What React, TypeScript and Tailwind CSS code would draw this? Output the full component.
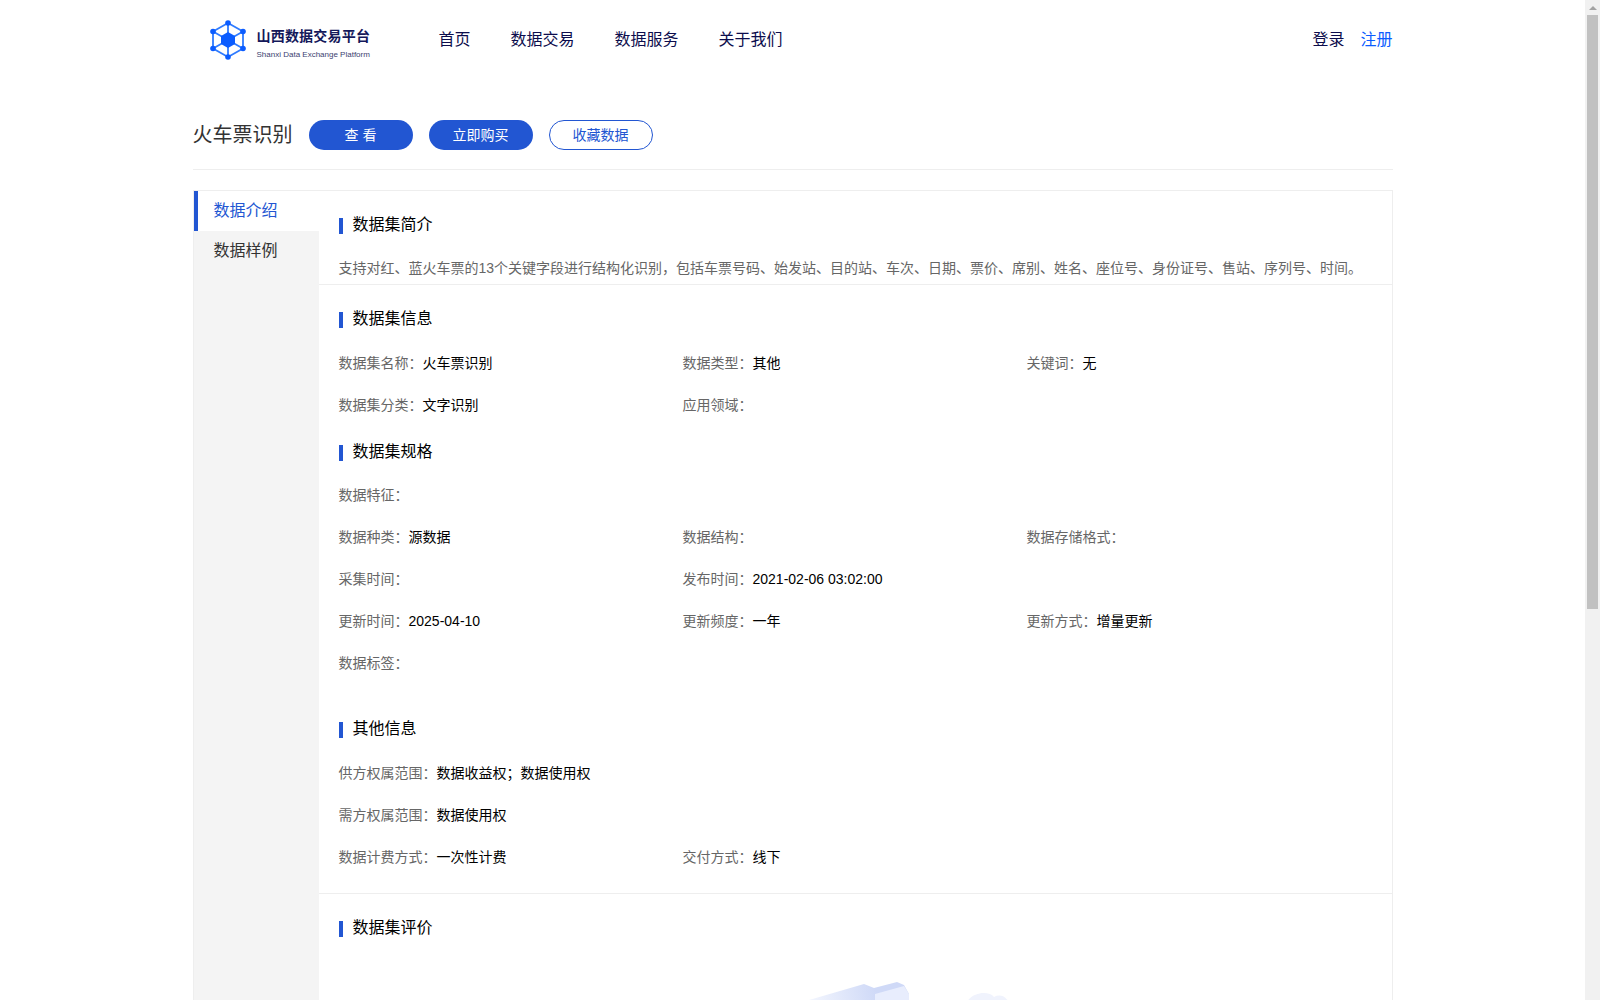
const font = "font-['Liberation_Sans','Noto_Sans_CJK_SC',sans-serif]";

type Field = { label: string; value?: string };

function Heading({ title, className }: { title: string; className?: string }) {
  return (
    <div className={`flex h-4 items-center ${className ?? ""}`}>
      <span className="h-4 w-1 bg-[#2256d2]" />
      <h2 className="ml-2.5 -mt-[3px] text-base text-black">{title}</h2>
    </div>
  );
}

function FieldRow({ fields }: { fields: Field[] }) {
  return (
    <div className="grid h-[42px] grid-cols-[344px_344px_344px] items-center text-sm">
      {fields.map((field) => (
        <div key={field.label}>
          <span className="text-[#666]">{field.label}：</span>
          <span className="text-black">{field.value}</span>
        </div>
      ))}
    </div>
  );
}

function Logo() {
  return (
    <svg width="40" height="42" viewBox="0 0 40 42" fill="none">
      <g stroke="#2f7bff" strokeWidth="1.8">
        <path d="M20 4 35 12.500V29.500L20 38 5 29.500V12.500Z" />
        <path d="M20 4V38M5 12.500 35 29.500M35 12.500 5 29.500" />
      </g>
      <path d="M20 13 27 17V25L20 29 13 25V17Z" fill="#0b5cff" />
      <g fill="#0b5cff">
        <circle cx="20" cy="4" r="2.800" />
        <circle cx="35" cy="12.500" r="2.800" />
        <circle cx="35" cy="29.500" r="2.800" />
        <circle cx="20" cy="38" r="2.800" />
        <circle cx="5" cy="29.500" r="2.800" />
        <circle cx="5" cy="12.500" r="2.800" />
      </g>
    </svg>
  );
}

export default function App() {
  return (
    <div className={`flex h-screen overflow-hidden bg-white ${font}`}>
      <div className="flex-1 overflow-hidden">
        <div className="mx-auto w-[1200px]">
          <header className="flex h-[78px] items-center pt-[2px]">
            <div className="ml-[15px] flex items-center">
              <Logo />
              <div className="mt-[6px] ml-[9px] w-[120px]">
                <div className="text-sm leading-5 font-bold tracking-[0.2px] text-[#14185a]">山西数据交易平台</div>
                <div className="mt-[3px] text-[8px] leading-3 whitespace-nowrap text-[#3c4270]">
                  Shanxi Data Exchange Platform
                </div>
              </div>
            </div>
            <nav className="ml-[62px] flex gap-10 text-base text-[#0d0d4d]">
              <a>首页</a>
              <a>数据交易</a>
              <a>数据服务</a>
              <a>关于我们</a>
            </nav>
            <div className="ml-auto flex gap-4 text-base">
              <a className="text-[#0d0d4d]">登录</a>
              <a className="text-[#0b5cff]">注册</a>
            </div>
          </header>

          <div className="flex h-[92px] items-start border-b border-[#eee] pt-[42px]">
            <h1 className="flex h-[30px] w-[116px] items-center text-xl text-[#333]">火车票识别</h1>
            <div className="flex gap-4 text-sm">
              <button className="h-[30px] w-[104px] rounded-full bg-[#2256d2] text-white">查 看</button>
              <button className="h-[30px] w-[104px] rounded-full bg-[#2256d2] text-white">立即购买</button>
              <button className="h-[30px] w-[104px] rounded-full border border-[#2256d2] text-[#2256d2]">收藏数据</button>
            </div>
          </div>

          <div className="mt-5 flex border border-[#eee]">
            <aside className="w-[125px] shrink-0 bg-[#f4f4f4] text-base">
              <div className="flex h-10 items-center border-l-4 border-[#2256d2] bg-white pl-4 text-[#2256d2]">数据介绍</div>
              <div className="flex h-10 items-center pl-5 text-[#333]">数据样例</div>
            </aside>
            <main className="flex-1">
              <section className="h-[94px] border-b border-[#eee] px-5 pt-[27px]">
                <Heading title="数据集简介" />
                <p className="mt-6 text-sm leading-5 whitespace-nowrap text-[#666]">
                  支持对红、蓝火车票的13个关键字段进行结构化识别，包括车票号码、始发站、目的站、车次、日期、票价、席别、姓名、座位号、身份证号、售站、序列号、时间。
                </p>
              </section>
              <section className="h-[609px] border-b border-[#eee] px-5 pt-[27px]">
                <Heading title="数据集信息" />
                <div className="mt-[14px]">
                  <FieldRow
                    fields={[
                      { label: "数据集名称", value: "火车票识别" },
                      { label: "数据类型", value: "其他" },
                      { label: "关键词", value: "无" },
                    ]}
                  />
                  <FieldRow fields={[{ label: "数据集分类", value: "文字识别" }, { label: "应用领域" }]} />
                </div>
                <Heading title="数据集规格" className="mt-[19px]" />
                <div className="mt-[13px]">
                  <FieldRow fields={[{ label: "数据特征" }]} />
                  <FieldRow
                    fields={[
                      { label: "数据种类", value: "源数据" },
                      { label: "数据结构" },
                      { label: "数据存储格式" },
                    ]}
                  />
                  <FieldRow fields={[{ label: "采集时间" }, { label: "发布时间", value: "2021-02-06 03:02:00" }]} />
                  <FieldRow
                    fields={[
                      { label: "更新时间", value: "2025-04-10" },
                      { label: "更新频度", value: "一年" },
                      { label: "更新方式", value: "增量更新" },
                    ]}
                  />
                  <FieldRow fields={[{ label: "数据标签" }]} />
                </div>
                <Heading title="其他信息" className="mt-[38px]" />
                <div className="mt-[14px]">
                  <FieldRow fields={[{ label: "供方权属范围", value: "数据收益权；数据使用权" }]} />
                  <FieldRow fields={[{ label: "需方权属范围", value: "数据使用权" }]} />
                  <FieldRow
                    fields={[
                      { label: "数据计费方式", value: "一次性计费" },
                      { label: "交付方式", value: "线下" },
                    ]}
                  />
                </div>
              </section>
              <section className="px-5 pt-[27px]">
                <Heading title="数据集评价" />
                <div className="mt-[43px] flex justify-center">
                  <svg width="320" height="40" viewBox="0 0 320 40" fill="none">
                    <defs>
                      <linearGradient id="tube" x1="114" y1="20" x2="180" y2="6" gradientUnits="userSpaceOnUse">
                        <stop stopColor="#f3f6fe" />
                        <stop offset="1" stopColor="#cfd9f7" />
                      </linearGradient>
                    </defs>
                    <path d="M114 20 169 4 179 8 202 2 209 5 214 14V40H114Z" fill="url(#tube)" />
                    <path d="M180 14 209 6 214 14V40H180Z" fill="#e8edfd" />
                    <path d="M269 30C272 11 294 10 299 17C306 13 314 17 316 30V40H269Z" fill="#f0f3fd" />
                  </svg>
                </div>
              </section>
            </main>
          </div>
        </div>
      </div>
      <div className="flex w-[15px] shrink-0 flex-col bg-[#f1f1f1]">
        <div className="flex h-[15px] items-center justify-center">
          <span className="h-0 w-0 border-x-[4px] border-b-[4px] border-x-transparent border-b-[#a3a3a3]" />
        </div>
        <div className="mx-[2px] h-[594px] bg-[#c1c1c1]" />
      </div>
    </div>
  );
}
